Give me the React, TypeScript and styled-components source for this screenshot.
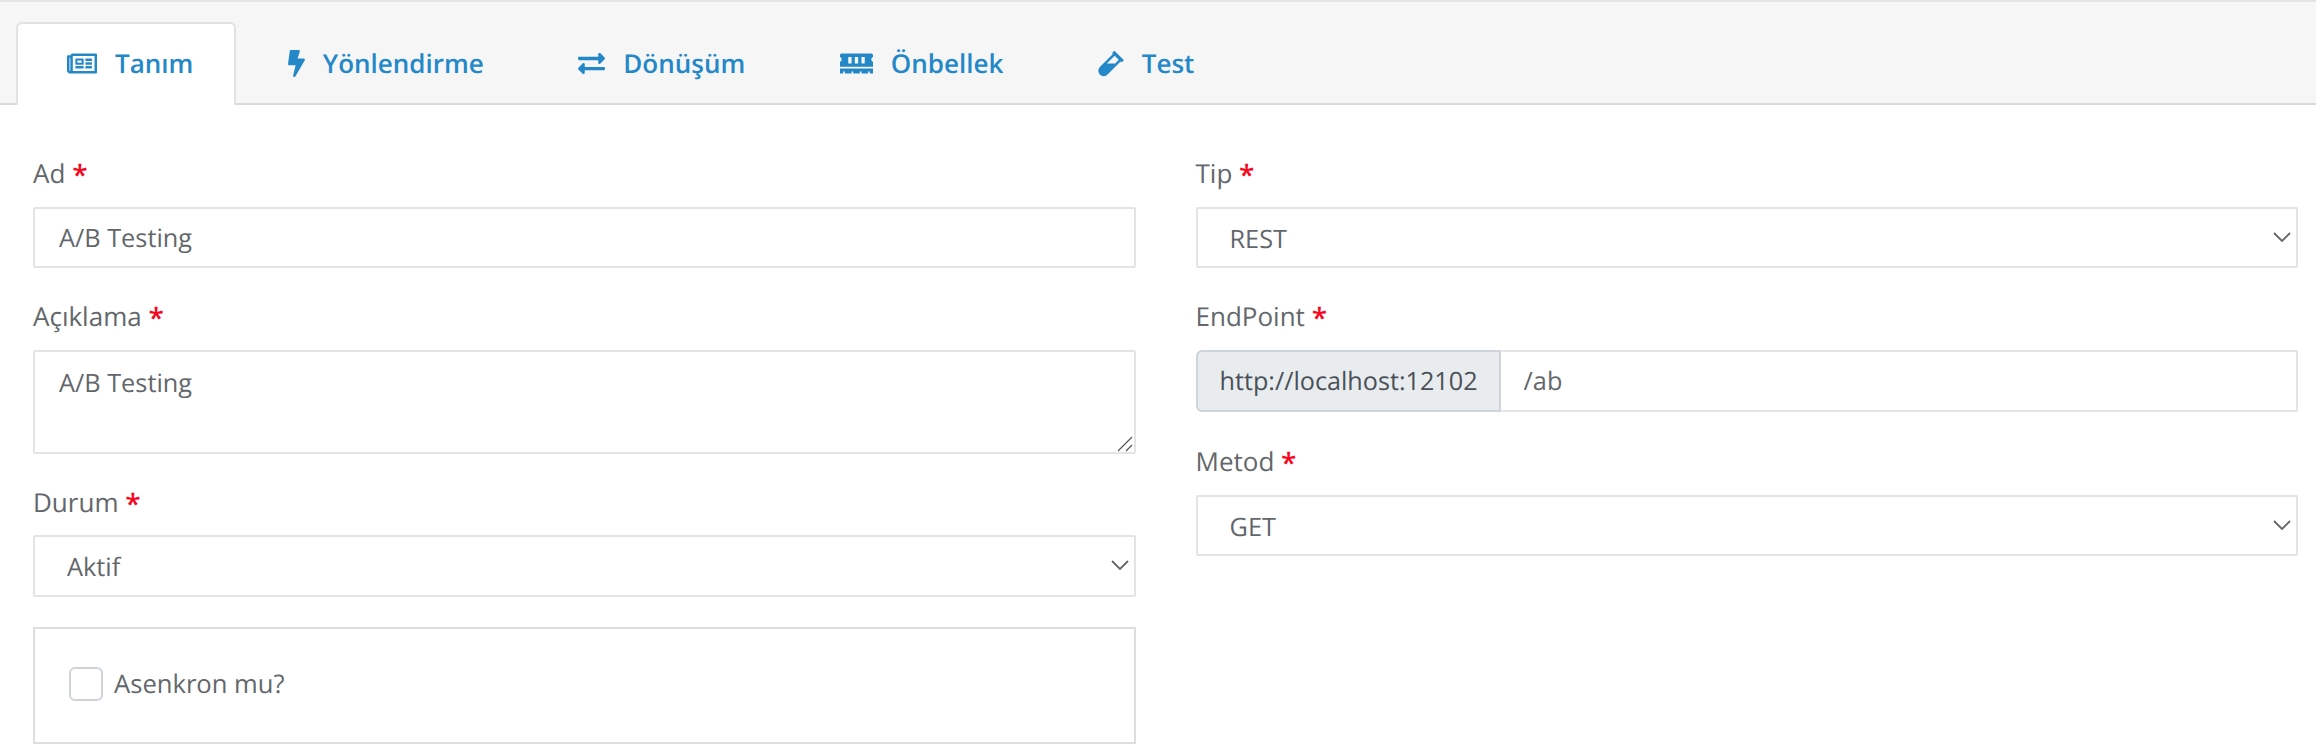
import React from 'react';
import styled, { createGlobalStyle } from 'styled-components';
import { FaRegNewspaper, FaBolt, FaExchangeAlt, FaMemory, FaVial } from 'react-icons/fa';

const Global = createGlobalStyle`
  html, body { margin: 0; padding: 0; background: #fff; height: 750px; overflow: hidden; }
  * { box-sizing: border-box; }
  body {
    font-family: "Open Sans", "Liberation Sans", sans-serif;
    color: #63676b;
    text-rendering: geometricPrecision;
  }
`;

const TabBar = styled.div`
  display: flex;
  align-items: flex-end;
  gap: 0.5px;
  height: 105px;
  padding: 22px 0 0 16px;
  background: #f6f6f6;
  border-top: 2px solid #e4e4e4;
  border-bottom: 2px solid #d9d9d9;
`;

const Tab = styled.div<{ $active?: boolean }>`
  display: flex;
  align-items: center;
  gap: 18px;
  height: 83px;
  margin-bottom: -2px;
  padding: 0 41px 3px 49px;
  border: 2px solid ${p => (p.$active ? '#e2e2e2' : 'transparent')};
  border-bottom: 0;
  border-radius: 6px 6px 0 0;
  background: ${p => (p.$active ? '#fff' : 'transparent')};
  color: #2488c8;
  font-size: 26px;
  font-weight: 600;
  white-space: nowrap;
`;

const TabIcon = styled.span<{ $w: number }>`
  display: inline-flex;
  width: ${p => p.$w}px;
  height: 27px;
  svg { width: 100%; height: 100%; display: block; }
`;

const Columns = styled.div`
  display: grid;
  grid-template-columns: 1fr 1fr;
  column-gap: 60px;
  padding: 50px 18px 0 33px;
`;

const Column = styled.div`
  display: flex;
  flex-direction: column;
  gap: 30px;
`;

const Field = styled.div`
  display: flex;
  flex-direction: column;
`;

const Label = styled.label`
  display: block;
  height: 51.75px;
  font-size: 26px;
  line-height: 36px;
  color: #63676b;
`;

const Required = styled.span`
  color: #f5061d;
  font-size: 28px;
  font-weight: 600;
  line-height: 0;
  vertical-align: -2px;
`;

const controlBase = `
  width: 100%;
  height: 61.5px;
  border: 2px solid #e4e4e4;
  border-radius: 2px;
  background: #fff;
  color: #63676b;
  font-family: "Open Sans", "Liberation Sans", sans-serif;
  font-size: 25.3px;
  text-rendering: geometricPrecision;
  outline: none;
`;

const TextInput = styled.input`
  ${controlBase}
  padding: 0 24px;
`;

const TextAreaWrap = styled.div`
  position: relative;
`;

const TextArea = styled.textarea`
  ${controlBase}
  display: block;
  height: 103.5px;
  padding: 13px 24px;
  line-height: 36px;
  resize: none;
`;

const ResizeGrip = styled.svg`
  position: absolute;
  right: 3px;
  bottom: 2px;
  width: 16px;
  height: 16px;
  pointer-events: none;
`;

const SelectWrap = styled.div`
  position: relative;
`;

const Select = styled.select`
  ${controlBase}
  appearance: none;
  padding: 2px 32px 0;
`;

const Chevron = styled.svg`
  position: absolute;
  right: 7px;
  top: 25px;
  width: 18px;
  height: 11px;
  pointer-events: none;
`;

const InputGroup = styled.div`
  display: flex;
  margin-bottom: 1.5px;
`;

const Prepend = styled.div`
  display: flex;
  align-items: center;
  flex: none;
  height: 61.5px;
  padding: 0 21px 0 22px;
  border: 2px solid #ced4da;
  border-radius: 6px 0 0 6px;
  background: #e9ecef;
  color: #495057;
  font-size: 25.2px;
  white-space: nowrap;
`;

const GroupInput = styled(TextInput)`
  flex: 1;
  min-width: 0;
  padding-left: 23px;
  border-left: 0;
`;

const CheckPanel = styled.div`
  display: flex;
  align-items: center;
  gap: 11px;
  height: 117px;
  padding: 0 34px 3px;
  border: 2px solid #dedede;
`;

const CheckBox = styled.input`
  appearance: none;
  flex: none;
  width: 34px;
  height: 34px;
  margin: 0;
  border: 2px solid #ced4da;
  border-radius: 6px;
  background: #fff;
`;

const CheckLabel = styled.label`
  font-size: 25.6px;
  color: #63676b;
`;

const tabs = [
  { label: 'Tanım', w: 30, icon: <FaRegNewspaper /> },
  { label: 'Yönlendirme', w: 17, icon: <FaBolt /> },
  { label: 'Dönüşüm', w: 27, icon: <FaExchangeAlt /> },
  { label: 'Önbellek', w: 33, icon: <FaMemory /> },
  { label: 'Test', w: 26, icon: <FaVial /> },
];

const FieldLabel = ({ text }: { text: string }) => (
  <Label>
    {text} <Required>*</Required>
  </Label>
);

const DropDown = ({ value }: { value: string }) => (
  <SelectWrap>
    <Select defaultValue={value}>
      <option>{value}</option>
    </Select>
    <Chevron viewBox="0 0 18 11" fill="none" stroke="#666" strokeWidth="1.8">
      <path d="M1 1l8 8 8-8" />
    </Chevron>
  </SelectWrap>
);

export default function App() {
  return (
    <>
      <Global />
      <TabBar>
        {tabs.map((t, i) => (
          <Tab key={t.label} $active={i === 0}>
            <TabIcon $w={t.w}>{t.icon}</TabIcon>
            {t.label}
          </Tab>
        ))}
      </TabBar>
      <Columns>
        <Column>
          <Field>
            <FieldLabel text="Ad" />
            <TextInput defaultValue="A/B Testing" />
          </Field>
          <Field>
            <FieldLabel text="Açıklama" />
            <TextAreaWrap>
              <TextArea defaultValue="A/B Testing" />
              <ResizeGrip viewBox="0 0 16 16" fill="none" stroke="#555" strokeWidth="1.2">
                <path d="M1 15L15 1M9 15l6-6" />
              </ResizeGrip>
            </TextAreaWrap>
          </Field>
          <Field>
            <FieldLabel text="Durum" />
            <DropDown value="Aktif" />
          </Field>
          <CheckPanel>
            <CheckBox type="checkbox" id="async" />
            <CheckLabel htmlFor="async">Asenkron mu?</CheckLabel>
          </CheckPanel>
        </Column>
        <Column>
          <Field>
            <FieldLabel text="Tip" />
            <DropDown value="REST" />
          </Field>
          <Field>
            <FieldLabel text="EndPoint" />
            <InputGroup>
              <Prepend>http://localhost:12102</Prepend>
              <GroupInput defaultValue="/ab" />
            </InputGroup>
          </Field>
          <Field>
            <FieldLabel text="Metod" />
            <DropDown value="GET" />
          </Field>
        </Column>
      </Columns>
    </>
  );
}
